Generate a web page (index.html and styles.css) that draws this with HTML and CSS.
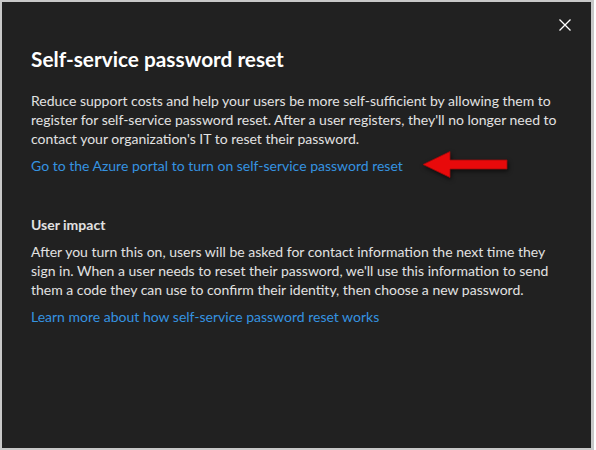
FILE: index.html
```html
<!DOCTYPE html>
<html lang="en">
<head>
<meta charset="utf-8">
<title>Self-service password reset</title>
<link rel="stylesheet" href="styles.css">
</head>
<body>
<div class="panel">
  <button class="close" aria-label="Close">
    <svg width="12" height="12" viewBox="0 0 12 12"><path d="M0.5 0.5 L11.5 11.5 M11.5 0.5 L0.5 11.5" stroke="#ffffff" stroke-width="1.3" fill="none"/></svg>
  </button>
  <h1 class="title">Self-service password reset</h1>
  <p class="text intro">Reduce support costs and help your users be more self-sufficient by allowing them to register for self-service password reset. After a user registers, they'll no longer need to contact your organization's IT to reset their password.</p>
  <a class="link" href="#">Go to the Azure portal to turn on self-service password reset</a>
  <h2 class="subtitle">User impact</h2>
  <p class="text">After you turn this on, users will be asked for contact information the next time they sign in. When a user needs to reset their password, we'll use this information to send them a code they can use to confirm their identity, then choose a new password.</p>
  <a class="link" href="#">Learn more about how self-service password reset works</a>
  <svg class="arrow" width="88" height="30" viewBox="0 0 88 30">
    <polygon points="1,13.5 28,0.5 28,9 85,9 85,18 28,18 28,26.5" fill="#e80a0b" stroke="#9e0a0a" stroke-width="0.8"/>
  </svg>
</div>
</body>
</html>
```
FILE: styles.css
```css
html, body {
  margin: 0;
  padding: 0;
  background: #ffffff;
}
body {
  width: 596px;
  height: 450px;
  font-family: Lato, "Open Sans", sans-serif;
}
.panel {
  position: relative;
  box-sizing: border-box;
  width: 594px;
  height: 450px;
  background: #212121;
  border: 2px solid #c8c8c8;
  border-right-width: 3px;
  padding: 44px 30px 0 29px;
  display: flex;
  flex-direction: column;
  align-items: flex-start;
}
.close {
  position: absolute;
  top: 16px;
  right: 19px;
  width: 14px;
  height: 14px;
  padding: 1px;
  border: 0;
  background: transparent;
  display: flex;
}
.title {
  margin: 0;
  font-size: 20.8px;
  line-height: 26px;
  font-weight: 700;
  color: #ffffff;
}
.text {
  margin: 8px 0 0;
  font-size: 14px;
  line-height: 19px;
  color: #e2e2e2;
}
.intro {
  margin-top: 19px;
}
.link {
  margin-top: 8px;
  font-size: 14px;
  line-height: 19px;
  color: #3593e0;
  text-decoration: none;
}
.subtitle {
  margin: 40px 0 0;
  font-size: 14px;
  line-height: 19px;
  font-weight: 700;
  color: #e2e2e2;
}
.arrow {
  position: absolute;
  left: 420px;
  top: 149px;
  filter: drop-shadow(1px 2px 2px rgba(0,0,0,0.6));
}
```
